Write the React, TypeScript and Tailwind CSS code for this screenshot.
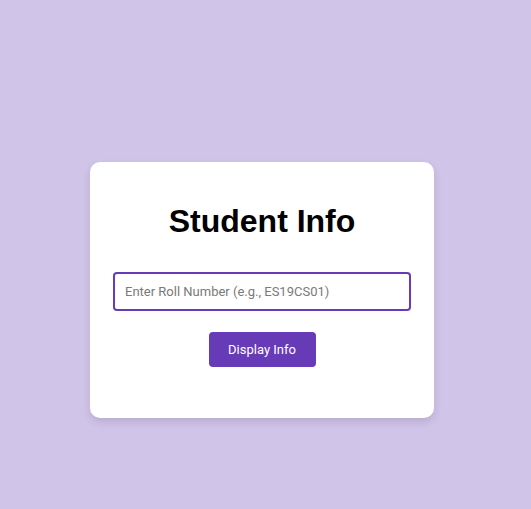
export default function App() {
  return (
    <div className="min-h-screen w-full bg-[#d1c4e9] pt-[162px] pl-[90px]">
      <div className="w-[344px] h-[256px] bg-white rounded-[10px] shadow-[0_4px_8px_rgba(0,0,0,0.12)] flex flex-col items-center pt-[41px]">
        <h1 className="font-['Liberation_Sans',Arial,sans-serif] font-bold text-[32px] leading-[37px] text-black">
          Student Info
        </h1>
        <input
          type="text"
          placeholder="Enter Roll Number (e.g., ES19CS01)"
          className="mt-[32px] w-[298px] h-[39px] border-2 border-[#673ab7] rounded-[4px] px-[10px] font-['Roboto',sans-serif] text-[13px] text-black placeholder:text-[#7a7a7a] outline-none"
        />
        <button className="mt-[21px] w-[107px] h-[35px] bg-[#673ab7] text-white rounded-[4px] font-['Roboto',sans-serif] text-[13px]">
          Display Info
        </button>
      </div>
    </div>
  );
}
